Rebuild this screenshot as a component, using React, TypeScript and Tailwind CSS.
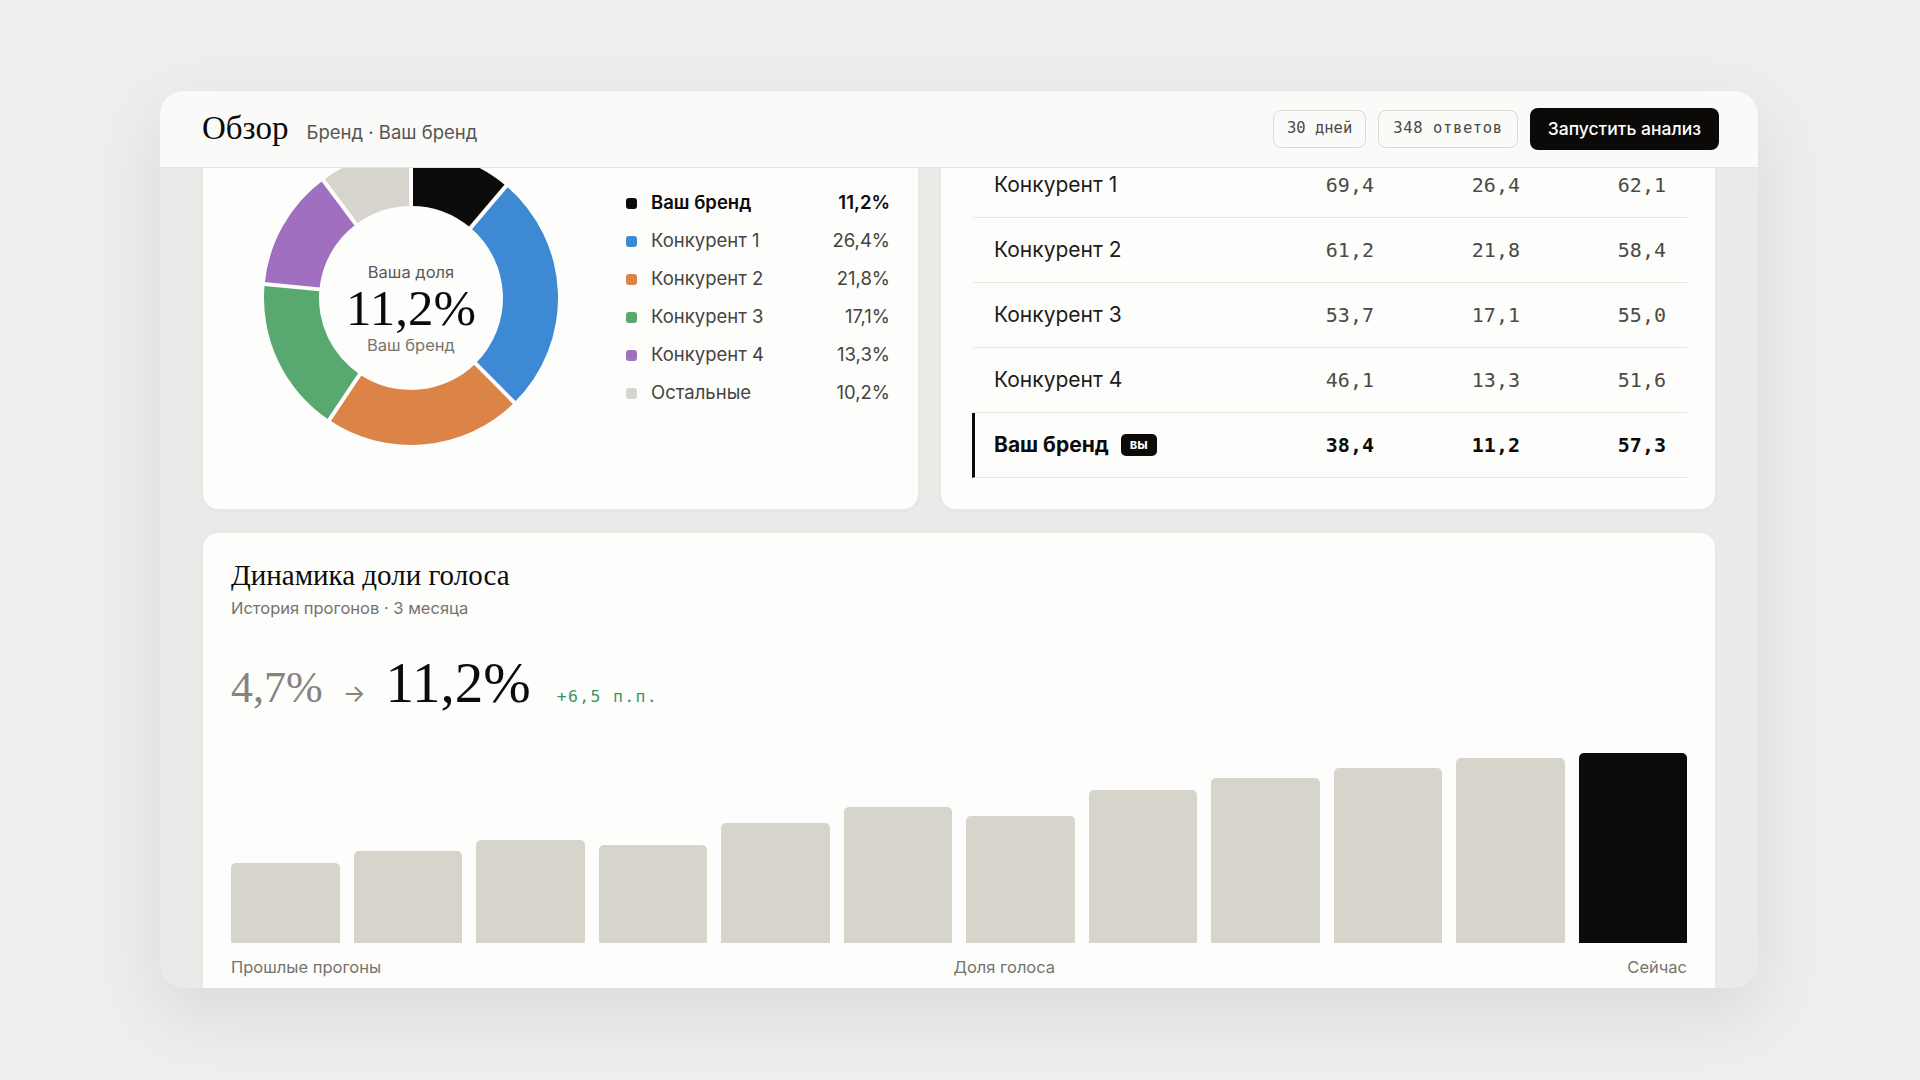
import React from "react"

const segments = [
  { name: "Ваш бренд", value: 11.2, label: "11,2%", color: "#0c0b0a", own: true },
  { name: "Конкурент 1", value: 26.4, label: "26,4%", color: "#3d89d3" },
  { name: "Конкурент 2", value: 21.8, label: "21,8%", color: "#dc8448" },
  { name: "Конкурент 3", value: 17.1, label: "17,1%", color: "#58a86f" },
  { name: "Конкурент 4", value: 13.3, label: "13,3%", color: "#a16fbf" },
  { name: "Остальные", value: 10.2, label: "10,2%", color: "#d7d4cd" },
]

const rows = [
  { name: "Конкурент 1", a: "69,4", b: "26,4", c: "62,1" },
  { name: "Конкурент 2", a: "61,2", b: "21,8", c: "58,4" },
  { name: "Конкурент 3", a: "53,7", b: "17,1", c: "55,0" },
  { name: "Конкурент 4", a: "46,1", b: "13,3", c: "51,6" },
  { name: "Ваш бренд", a: "38,4", b: "11,2", c: "57,3", own: true },
]

// share of voice per run, last one is now
const history = [4.7, 5.4, 6.1, 5.8, 7.1, 8.0, 7.5, 9.0, 9.7, 10.3, 10.9, 11.2]

const SIZE = 294
const C = SIZE / 2
const R = 147
const r = 92

function pt(rad: number, deg: number) {
  const a = (deg * Math.PI) / 180
  return [C + rad * Math.sin(a), C - rad * Math.cos(a)]
}

function sector(a0: number, a1: number) {
  const large = a1 - a0 > 180 ? 1 : 0
  const [x0, y0] = pt(R, a0)
  const [x1, y1] = pt(R, a1)
  const [x2, y2] = pt(r, a1)
  const [x3, y3] = pt(r, a0)
  return `M${x0} ${y0} A${R} ${R} 0 ${large} 1 ${x1} ${y1} L${x2} ${y2} A${r} ${r} 0 ${large} 0 ${x3} ${y3} Z`
}

function Donut() {
  let acc = 0
  const arcs = segments.map((s) => {
    const a0 = (acc / 100) * 360
    acc += s.value
    const a1 = (acc / 100) * 360
    return { ...s, a0, a1 }
  })

  return (
    <div className="relative w-[294px] h-[294px] shrink-0">
      <svg width={SIZE} height={SIZE} viewBox={`0 0 ${SIZE} ${SIZE}`}>
        {arcs.map((s) => (
          <path key={s.name} d={sector(s.a0, s.a1)} fill={s.color} />
        ))}
        {arcs.map((s) => {
          const [x0, y0] = pt(r - 3, s.a0)
          const [x1, y1] = pt(R + 3, s.a0)
          return <line key={s.name} x1={x0} y1={y0} x2={x1} y2={y1} stroke="#fdfdfc" strokeWidth={4} />
        })}
      </svg>
      <div className="absolute inset-0 flex flex-col items-center pt-[111px]">
        <span className="text-[16.5px] leading-[21px] text-[#5b5a56]">Ваша доля</span>
        <span className="font-['Liberation_Serif',serif] text-[51px] leading-[50px] text-[#0c0b0a]">11,2%</span>
        <span className="mt-[2px] text-[16.5px] leading-[21px] text-[#77756f]">Ваш бренд</span>
      </div>
    </div>
  )
}

function Legend() {
  return (
    <div className="ml-[68px] w-[264px] flex flex-col">
      {segments.map((s) => (
        <div key={s.name} className="h-[38px] flex items-center">
          <span className="w-[11px] h-[11px] rounded-[3px] shrink-0" style={{ backgroundColor: s.color }} />
          <span
            className={
              s.own
                ? "ml-[14px] flex-1 text-[18.5px] font-semibold text-[#0c0b0a]"
                : "ml-[14px] flex-1 text-[18.5px] text-[#454441]"
            }
          >
            {s.name}
          </span>
          <span className={s.own ? "text-[18.5px] font-semibold text-[#0c0b0a]" : "text-[18.5px] text-[#454441]"}>
            {s.label}
          </span>
        </div>
      ))}
    </div>
  )
}

function CompetitorTable() {
  return (
    <div className="flex flex-col">
      {rows.map((row) => (
        <div
          key={row.name}
          className={
            row.own
              ? "grid grid-cols-[1fr_146px_146px_146px] h-[65px] items-center border-b border-[#e6e5e1] border-l-[3px] border-l-[#0c0b0a]"
              : "grid grid-cols-[1fr_146px_146px_146px] h-[65px] items-center border-b border-[#e6e5e1] border-l-[3px] border-l-transparent"
          }
        >
          {row.own ? (
            <div className="pl-[19px] flex items-center gap-[12px]">
              <span className="text-[21px] font-bold text-[#0c0b0a]">{row.name}</span>
              <span className="h-[22px] px-[9px] rounded-[5px] bg-[#0c0b0a] text-white text-[13px] font-bold flex items-center">
                вы
              </span>
            </div>
          ) : (
            <div className="pl-[19px] text-[21px] text-[#1d1c1a]">{row.name}</div>
          )}
          {[row.a, row.b, row.c].map((v, i) => (
            <div
              key={i}
              className={
                row.own
                  ? "pr-[21px] text-right font-['DejaVu_Sans_Mono',monospace] text-[20px] font-bold text-[#0c0b0a]"
                  : "pr-[21px] text-right font-['DejaVu_Sans_Mono',monospace] text-[20px] text-[#4b4a47]"
              }
            >
              {v}
            </div>
          ))}
        </div>
      ))}
    </div>
  )
}

function HistoryCard() {
  const max = Math.max(...history)
  return (
    <div className="bg-[#fdfdfc] rounded-[16px] border border-[#ebeae6] shadow-[0_1px_3px_rgba(0,0,0,0.04)] px-[28px] pt-[26px] pb-[30px]">
      <h2 className="font-['Liberation_Serif',serif] text-[29px] leading-[32px] text-[#0c0b0a]">Динамика доли голоса</h2>
      <p className="mt-[7px] text-[16.5px] leading-[20px] text-[#75736e]">История прогонов · 3 месяца</p>
      <div className="mt-[37px] flex items-baseline">
        <span className="font-['Liberation_Serif',serif] text-[44px] leading-[55px] text-[#85837e]">4,7%</span>
        <span className="ml-[20px] text-[24px] text-[#85837e]">→</span>
        <span className="ml-[20px] font-['Liberation_Serif',serif] text-[57px] leading-[55px] text-[#0c0b0a]">11,2%</span>
        <span className="ml-[26px] font-['DejaVu_Sans_Mono',monospace] text-[16.5px] tracking-[0.08em] text-[#3d9461]">
          +6,5 п.п.
        </span>
      </div>
      <div className="mt-[38px] h-[190px] flex items-end gap-[14px]">
        {history.map((v, i) => (
          <div
            key={i}
            className={i === history.length - 1 ? "flex-1 rounded-t-[5px] bg-[#0c0b09]" : "flex-1 rounded-t-[5px] bg-[#d7d4cb]"}
            style={{ height: `${(v / max) * 190}px` }}
          />
        ))}
      </div>
      <div className="mt-[14px] flex justify-between text-[16.5px] leading-[20px] text-[#75736e]">
        <span>Прошлые прогоны</span>
        <span>Доля голоса</span>
        <span>Сейчас</span>
      </div>
    </div>
  )
}

export default function App() {
  return (
    <div className="min-h-screen bg-[#efeeec] pt-[91px] pl-[160px] font-['Inter',sans-serif]">
      <div className="w-[1598px] h-[897px] rounded-[24px] overflow-hidden bg-[#ebeae8] flex flex-col shadow-[0_24px_70px_rgba(0,0,0,0.09)]">
        <header className="h-[77px] shrink-0 bg-[#fafaf8] border-b border-[#e4e3df] flex items-center pl-[42px] pr-[39px]">
          <div className="flex items-baseline gap-[18px]">
            <h1 className="font-['Liberation_Serif',serif] text-[33px] text-[#0c0b0a]">Обзор</h1>
            <span className="text-[18.5px] text-[#575652]">Бренд · Ваш бренд</span>
          </div>
          <div className="ml-auto flex items-center gap-[12px]">
            <span className="h-[38px] px-[13px] flex items-center rounded-[8px] border border-[#dcdad5] font-['DejaVu_Sans_Mono',monospace] text-[15.5px] text-[#4b4a47]">
              30 дней
            </span>
            <span className="h-[38px] px-[14px] flex items-center rounded-[8px] border border-[#dcdad5] font-['DejaVu_Sans_Mono',monospace] text-[15.5px] tracking-[0.04em] text-[#4b4a47]">
              348 ответов
            </span>
            <button className="h-[42px] px-[18px] rounded-[8px] bg-[#0b0a09] text-white text-[17.5px] font-medium">
              Запустить анализ
            </button>
          </div>
        </header>
        <div className="flex-1 overflow-hidden">
          <div className="-mt-[30px] px-[42px] flex flex-col gap-[22px]">
            <div className="grid grid-cols-[717px_776px] gap-[21px]">
              <div className="bg-[#fdfdfc] rounded-[16px] border border-[#ebeae6] shadow-[0_1px_3px_rgba(0,0,0,0.04)] px-[31px] pt-[12px] pb-[64px] flex items-start">
                <div className="ml-[30px] flex items-center">
                  <Donut />
                  <Legend />
                </div>
              </div>
              <div className="bg-[#fdfdfc] rounded-[16px] border border-[#ebeae6] shadow-[0_1px_3px_rgba(0,0,0,0.04)] pl-[31px] pr-[28px] pt-[14px] pb-[29px]">
                <CompetitorTable />
              </div>
            </div>
            <HistoryCard />
          </div>
        </div>
      </div>
    </div>
  )
}
